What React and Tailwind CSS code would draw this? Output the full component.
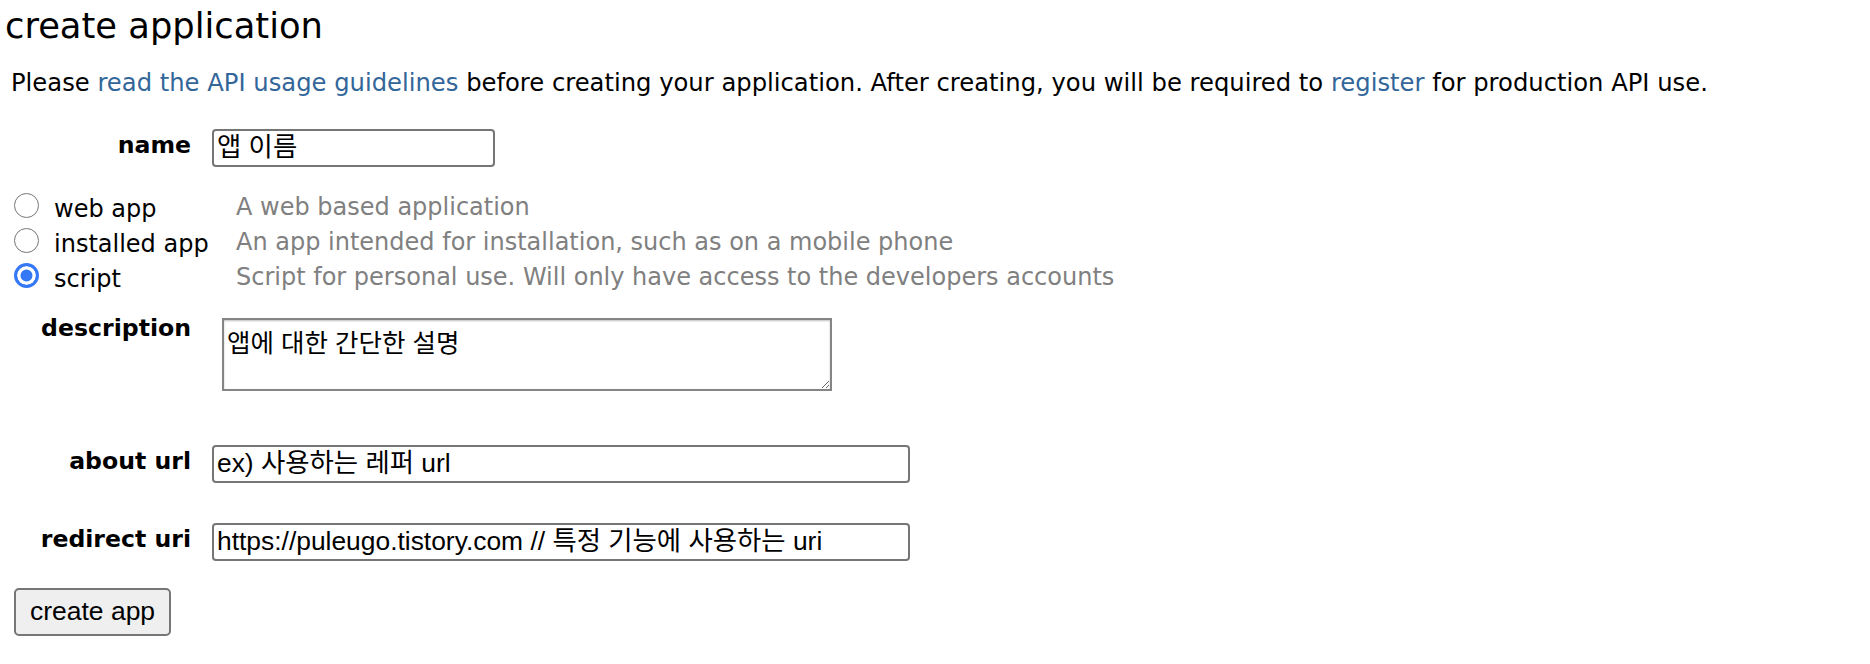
import React, { useState } from "react";

const labelCls =
  "w-[191px] shrink-0 text-right font-bold text-[23.6px] leading-[28px] text-black";
const fieldCls =
  "h-[38px] border-2 border-[#767676] rounded-[4px] px-[3px] text-[26.4px] text-black bg-white outline-none font-['Liberation_Sans','Noto_Sans_CJK_KR',sans-serif]";

const appTypes = [
  { id: "web", label: "web app", desc: "A web based application" },
  {
    id: "installed",
    label: "installed app",
    desc: "An app intended for installation, such as on a mobile phone",
  },
  {
    id: "script",
    label: "script",
    desc: "Script for personal use. Will only have access to the developers accounts",
  },
];

const App = () => {
  const [appType, setAppType] = useState("script");

  return (
    <div className="min-h-screen bg-white text-black font-['DejaVu_Sans','Noto_Sans_CJK_KR',sans-serif]">
      <h1 className="pl-[5px] pt-[5px] text-[35.3px] leading-[41px] font-normal">
        create application
      </h1>

      <p className="mt-[23px] pl-[11px] text-[24.25px] leading-[28px] whitespace-nowrap">
        Please{" "}
        <a href="#" className="text-[#336699]">
          read the API usage guidelines
        </a>{" "}
        before creating your application. After creating, you will be required
        to{" "}
        <a href="#" className="text-[#336699]">
          register
        </a>{" "}
        for production API use.
      </p>

      <form className="flex flex-col" onSubmit={(e) => e.preventDefault()}>
        {/* name */}
        <div className="mt-[32px] flex items-start">
          <label className={`${labelCls} pt-[2px]`}>name</label>
          <input
            className={`${fieldCls} ml-[21px] w-[283px]`}
            defaultValue="앱 이름"
          />
        </div>

        {/* app type */}
        <div className="mt-[19px] flex flex-col">
          {appTypes.map(({ id, label, desc }) => (
            <div key={id} className="flex h-[35px] items-start text-[24px] leading-[28px]">
              <label className="flex w-[236px] shrink-0 items-start">
                <input
                  type="radio"
                  name="app_type"
                  checked={appType === id}
                  onChange={() => setAppType(id)}
                  className="ml-[14px] mr-[15px] mt-[7px] h-[25px] w-[25px] shrink-0 appearance-none rounded-full border-[1.5px] border-[#767676] bg-white checked:border-[3px] checked:border-[#3478f6] checked:bg-[#3478f6] checked:shadow-[inset_0_0_0_3.5px_white]"
                />
                <span className="pt-[9px]">{label}</span>
              </label>
              <span className="pt-[7px] text-[#808080]">{desc}</span>
            </div>
          ))}
        </div>

        {/* description */}
        <div className="mt-[23px] flex items-start">
          <label className={labelCls}>description</label>
          <textarea
            className="ml-[31px] mt-[4px] h-[73px] w-[610px] resize border-2 border-[#858585] px-[3px] pt-[8px] text-[25.5px] leading-[30px] text-black shadow-[inset_0_1px_2px_rgba(0,0,0,0.25)] outline-none font-['Liberation_Sans','Noto_Sans_CJK_KR',sans-serif]"
            defaultValue="앱에 대한 간단한 설명"
          />
        </div>

        {/* about url */}
        <div className="mt-[54px] flex items-start">
          <label className={`${labelCls} pt-[2px]`}>about url</label>
          <input
            className={`${fieldCls} ml-[21px] w-[698px]`}
            defaultValue="ex) 사용하는 레퍼 url"
          />
        </div>

        {/* redirect uri */}
        <div className="mt-[40px] flex items-start">
          <label className={`${labelCls} pt-[2px]`}>redirect uri</label>
          <input
            className={`${fieldCls} ml-[21px] w-[698px]`}
            defaultValue="https://puleugo.tistory.com // 특정 기능에 사용하는 uri"
          />
        </div>

        <div className="mt-[27px] pl-[14px]">
          <button
            type="submit"
            className="h-[48px] w-[157px] rounded-[5px] border-2 border-[#767676] bg-[#efefef] text-[26.5px] text-black font-['Liberation_Sans',sans-serif]"
          >
            create app
          </button>
        </div>
      </form>
    </div>
  );
};

export default App;
